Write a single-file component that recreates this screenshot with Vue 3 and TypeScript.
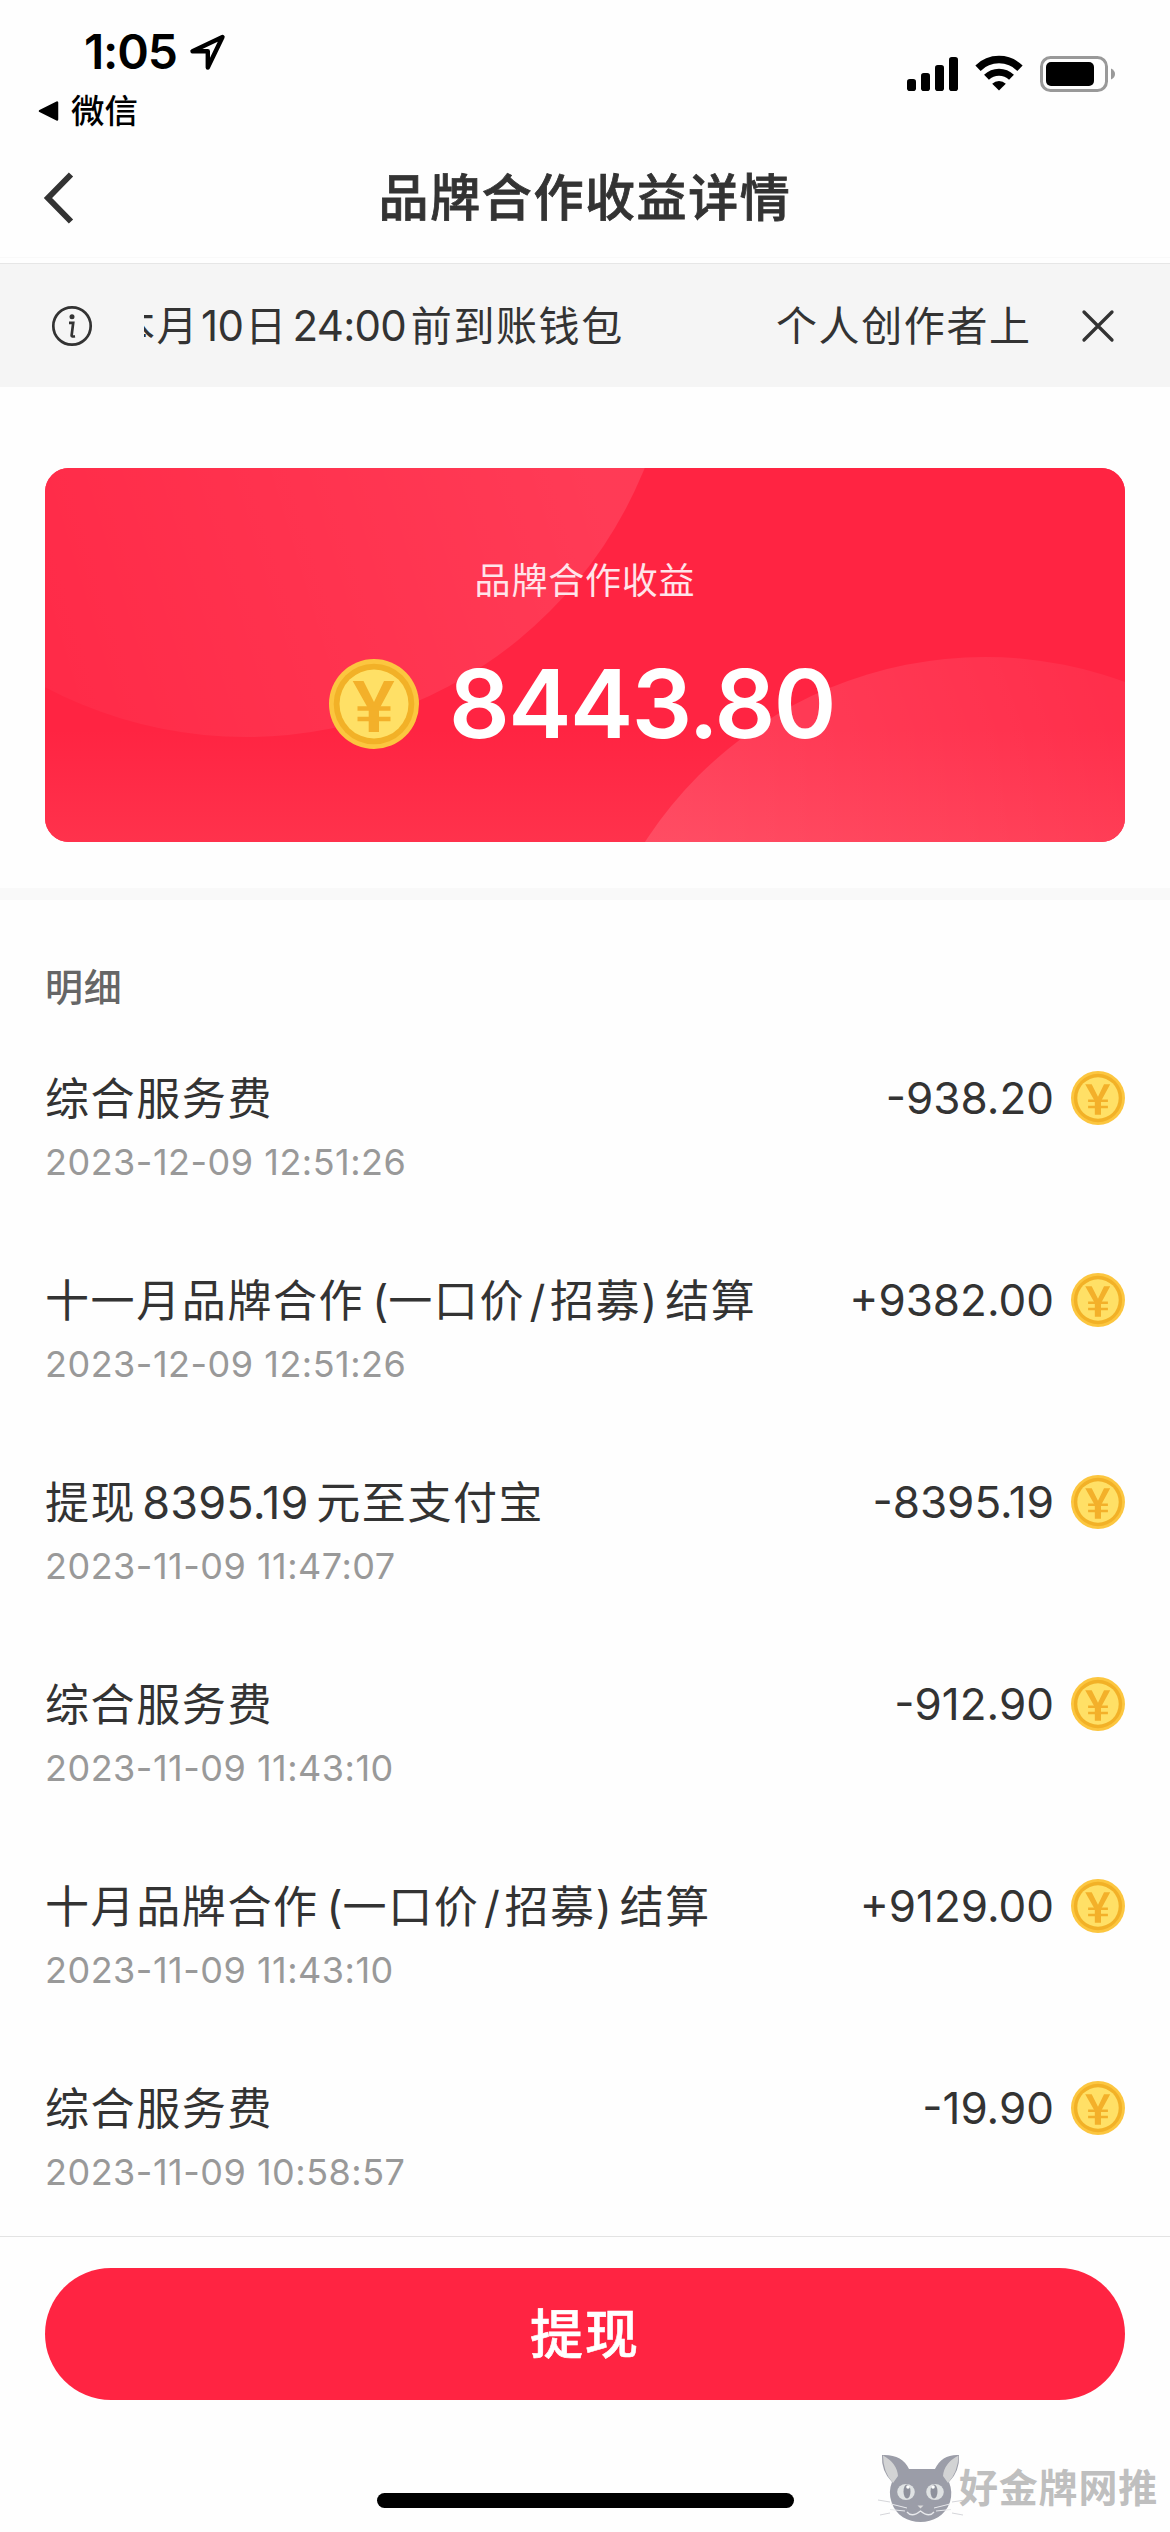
<script setup lang="ts">
interface Run {
  text: string
  kind: 'cjk' | 'num' | 'open' | 'slash' | 'close'
}

interface Entry {
  title: Run[]
  time: string
  amount: string
}

const cjk = (text: string): Run => ({ text, kind: 'cjk' })

const settlement = (month: string): Run[] => [
  cjk(`${month}品牌合作`),
  { text: '(', kind: 'open' },
  cjk('一口价'),
  { text: '/', kind: 'slash' },
  cjk('招募'),
  { text: ')', kind: 'close' },
  cjk('结算'),
]

const entries: Entry[] = [
  { title: [cjk('综合服务费')], time: '2023-12-09 12:51:26', amount: '-938.20' },
  { title: settlement('十一月'), time: '2023-12-09 12:51:26', amount: '+9382.00' },
  {
    title: [cjk('提现'), { text: '8395.19', kind: 'num' }, cjk('元至支付宝')],
    time: '2023-11-09 11:47:07',
    amount: '-8395.19',
  },
  { title: [cjk('综合服务费')], time: '2023-11-09 11:43:10', amount: '-912.90' },
  { title: settlement('十月'), time: '2023-11-09 11:43:10', amount: '+9129.00' },
  { title: [cjk('综合服务费')], time: '2023-11-09 10:58:57', amount: '-19.90' },
]
</script>

<template>
  <div class="screen">
    <svg class="defs" width="0" height="0" aria-hidden="true">
      <symbol id="coin" viewBox="0 0 90 90">
        <circle cx="45" cy="45" r="45" fill="#fcc63f" />
        <circle cx="45" cy="45" r="40.300" fill="#f2b127" />
        <circle cx="45" cy="45" r="34.500" fill="#ffe066" />
        <path d="M23.700 22H34.500L45 43 55 22H65.300L50 50.500V73H39.700V50.500Z" fill="#f3b02a" />
        <path d="M28.500 49.500H61.500M28.500 60H61.500" stroke="#f3b02a" stroke-width="4.400" />
      </symbol>
    </svg>

    <header class="status">
      <div class="status-left">
        <div class="clock">
          <span class="time">1:05</span>
          <svg class="locate" width="37" height="37" viewBox="0 0 37 37">
            <path d="M33.500 3 3.500 17.300H18.800V33.500Z" fill="none" stroke="#000" stroke-width="4.400" stroke-linejoin="round" />
          </svg>
        </div>
        <div class="return">
          <svg width="22" height="22" viewBox="0 0 22 22">
            <path d="M2 11 19 2.500V19.500Z" stroke="#000" stroke-width="2.500" stroke-linejoin="round" />
          </svg>
          <span>微信</span>
        </div>
      </div>
      <div class="status-right">
        <svg width="51" height="34" viewBox="0 0 51 34">
          <rect x="0" y="22" width="9" height="12" rx="2.800" />
          <rect x="14" y="16" width="9" height="18" rx="2.800" />
          <rect x="28" y="8" width="9" height="26" rx="2.800" />
          <rect x="42" y="0" width="9" height="34" rx="2.800" />
        </svg>
        <svg class="wifi" width="48" height="36" viewBox="0 0 48 36">
          <path d="M3 13.200A30 30 0 0 1 45 13.200" fill="none" stroke="#000" stroke-width="7.500" />
          <path d="M11.500 22.200A18 18 0 0 1 36.500 22.200" fill="none" stroke="#000" stroke-width="7" />
          <path d="M17.200 28.700A9.600 9.600 0 0 1 30.800 28.700L24 35.600Z" />
        </svg>
        <svg width="76" height="36" viewBox="0 0 76 36">
          <rect x="1.500" y="1.500" width="65" height="33" rx="9" fill="none" stroke="#999" stroke-width="3" />
          <rect x="6" y="6" width="48" height="24" rx="5" />
          <path d="M71 12.500Q75 14.500 75 18T71 23.500Z" fill="#999" />
        </svg>
      </div>
    </header>

    <nav class="nav">
      <svg class="back" width="32" height="54" viewBox="0 0 32 54">
        <path d="M28 3.500 5 27 28 50.500" fill="none" stroke="#333" stroke-width="6" />
      </svg>
      <h1>品牌合作收益详情</h1>
    </nav>

    <section class="notice">
      <svg class="info" width="42" height="42" viewBox="0 0 42 42">
        <circle cx="21" cy="21" r="18.700" fill="none" stroke="#333" stroke-width="2.700" />
        <circle cx="21" cy="11.700" r="2.500" fill="#333" />
        <path d="M18 17.800H22.200L20.600 30.500Q20.600 32 24 31.300" fill="none" stroke="#333" stroke-width="2.700" />
      </svg>
      <div class="ticker">
        <p class="message">本月<span class="day">10</span>日<span class="hour">24:00</span>前到账钱包</p>
        <p class="message">个人创作者上</p>
      </div>
      <svg class="dismiss" width="34" height="34" viewBox="0 0 34 34">
        <path d="M3 3 31 31M31 3 3 31" stroke="#333" stroke-width="3.300" stroke-linecap="round" />
      </svg>
    </section>

    <main class="content">
      <section class="card">
        <svg class="card-art" width="1080" height="374" viewBox="0 0 1080 374">
          <defs>
            <linearGradient id="base" x1="0" y1="0" x2="0" y2="1">
              <stop offset="0.700" stop-color="#ff2442" />
              <stop offset="1" stop-color="#ff324c" />
            </linearGradient>
            <linearGradient id="orb-left" gradientUnits="userSpaceOnUse" x1="0" y1="230" x2="560" y2="60">
              <stop offset="0" stop-color="#fff" stop-opacity="0.030" />
              <stop offset="1" stop-color="#fff" stop-opacity="0.105" />
            </linearGradient>
            <linearGradient id="orb-right" gradientUnits="userSpaceOnUse" x1="640" y1="374" x2="1060" y2="220">
              <stop offset="0" stop-color="#fff" stop-opacity="0.130" />
              <stop offset="1" stop-color="#fff" stop-opacity="0.050" />
            </linearGradient>
          </defs>
          <rect width="1080" height="374" fill="url(#base)" />
          <circle cx="201" cy="-161" r="430" fill="url(#orb-left)" />
          <circle cx="940" cy="594" r="405" fill="url(#orb-right)" />
        </svg>
        <p class="card-label">品牌合作收益</p>
        <div class="balance">
          <svg width="90" height="90"><use href="#coin" /></svg>
          <strong>8443.80</strong>
        </div>
      </section>

      <section class="details">
        <h2>明细</h2>
        <ul>
          <li v-for="(entry, i) in entries" :key="i">
            <div class="row">
              <span class="title"><span v-for="(run, j) in entry.title" :key="j" :class="run.kind">{{ run.text }}</span></span>
              <span class="amount">{{ entry.amount }}</span>
              <svg class="coin" width="54" height="54"><use href="#coin" /></svg>
            </div>
            <time>{{ entry.time }}</time>
          </li>
        </ul>
      </section>
    </main>

    <footer class="footer">
      <button type="button">提现</button>
      <div class="home-bar"></div>
      <div class="watermark">
        <svg width="90" height="72" viewBox="0 0 90 72">
          <path d="M5 3Q25 2 32 17H58Q65 2 82 3Q83 19 72 30Q76 40 73 50C68 64 56 70 43.500 70S19 64 14.500 50Q11 40 15 30Q4 19 5 3Z" fill="#9b9da8" />
          <path d="M6 3.500Q20 11 21 24L16 31Q6 20 6 3.500ZM81.500 3.500Q67 11 66 24L71 31Q81 20 81.500 3.500Z" fill="#d2d3d4" />
          <ellipse cx="29" cy="40" rx="8.800" ry="8" fill="#dfe2e3" />
          <ellipse cx="58" cy="40" rx="8.800" ry="8" fill="#dfe2e3" />
          <ellipse cx="30" cy="39.500" rx="3.500" ry="7" fill="#8e919c" />
          <ellipse cx="57" cy="39.500" rx="3.500" ry="7" fill="#8e919c" />
          <circle cx="31" cy="35" r="1.800" fill="#fff" />
          <circle cx="56" cy="35" r="1.800" fill="#fff" />
          <path d="M40.500 53.500H46.500L43.500 56.500Z" fill="#dcdcdc" />
          <path d="M30 60Q35 66 43.500 59Q52 66 57 60" fill="none" stroke="#e8e9ec" stroke-width="1.300" />
          <path d="M30 56 14 52M28 59 13 57.500M57 56 73 52M59 59 74 57.500" stroke="#e8e9ec" stroke-width="1" />
          <path d="M13 50 1 48M13 61 3 63M75 50 88 48M75 61 86 63" stroke="#d5d6da" stroke-width="1" />
        </svg>
        <span>好金牌网推</span>
      </div>
    </footer>
  </div>
</template>

<style>
body {
  margin: 0;
  background: #fff;
}
</style>

<style scoped>
.screen {
  position: relative;
  display: flex;
  flex-direction: column;
  width: 1170px;
  height: 2532px;
  overflow: hidden;
  background: #fefefe;
  color: #333;
  font-family: Inter, 'Noto Sans CJK SC', sans-serif;
}

.defs {
  position: absolute;
}

svg {
  display: block;
  flex: none;
}

h1,
h2,
p,
ul {
  margin: 0;
  padding: 0;
  font-weight: 400;
}

.status {
  display: flex;
  justify-content: space-between;
  height: 138px;
  color: #000;
}

.clock {
  display: flex;
  align-items: center;
  height: 40px;
  padding: 32px 0 0 84px;
}

.time {
  width: 105px;
  font-size: 48px;
  font-weight: 600;
  line-height: 40px;
  letter-spacing: -1.2px;
}

.return {
  display: flex;
  align-items: center;
  gap: 11px;
  height: 40px;
  padding: 19px 0 0 38px;
  font-size: 33.5px;
  font-weight: 500;
  line-height: 40px;
}

.status-right {
  display: flex;
  align-items: flex-end;
  height: 92px;
  padding-right: 54px;
}

.status-right svg:first-child {
  margin-bottom: 1px;
}

.wifi {
  margin: 0 17px 1px;
}

.nav {
  display: flex;
  align-items: center;
  height: 119px;
  border-bottom: 1px solid #f9f9f9;
}

.back {
  margin-left: 43px;
}

h1 {
  flex: 1;
  margin-right: 75px;
  font-size: 50px;
  font-weight: 500;
  -webkit-text-stroke: 0.8px #333;
  line-height: 60px;
  letter-spacing: 1.6px;
  text-align: center;
}

.notice {
  display: flex;
  align-items: center;
  height: 123px;
  margin-top: 5px;
  padding: 0 55px 0 51px;
  border-top: 1px solid #e6e6e6;
  background: #f5f5f5;
}

.ticker {
  display: flex;
  width: 888px;
  margin: 0 auto 0 51px;
  overflow: hidden;
}

.message {
  flex: none;
  width: 662px;
  margin-left: -30px;
  padding-top: 1px;
  font-size: 41px;
  line-height: 60px;
  letter-spacing: 1.6px;
  white-space: nowrap;
}

.message + .message {
  width: auto;
  margin-left: 0;
}

.day,
.hour {
  display: inline-block;
  text-align: center;
  font-size: 42px;
  letter-spacing: -0.7px;
}

.day {
  width: 46px;
}

.hour {
  width: 123px;
}

.content {
  flex: 1;
  overflow: hidden;
}

.card {
  position: relative;
  display: flex;
  flex-direction: column;
  align-items: center;
  height: 374px;
  margin: 81px 45px 46px;
  border-radius: 24px;
  overflow: hidden;
  background: #ff2442;
  color: #fff;
}

.card-art {
  position: absolute;
  inset: 0;
}

.card-label {
  position: relative;
  margin-top: 91px;
  color: #ffe4ea;
  font-size: 36px;
  line-height: 44px;
  letter-spacing: 0.8px;
}

.balance {
  position: relative;
  display: flex;
  align-items: center;
  gap: 30px;
  margin-top: 56px;
}

.balance strong {
  margin-right: 6px;
  font-size: 95px;
  font-weight: 600;
  line-height: 90px;
  letter-spacing: -1.6px;
}

.details {
  padding: 65px 45px 0;
  border-top: 12px solid #f9f9f9;
}

h2 {
  color: #666;
  font-size: 38px;
  font-weight: 500;
  line-height: 44px;
  letter-spacing: 0.8px;
}

ul {
  margin-top: 58px;
  list-style: none;
}

li {
  height: 202px;
}

.row {
  display: flex;
  align-items: center;
  height: 62px;
}

.title {
  flex: 1;
  padding-top: 1px;
  font-size: 44px;
  line-height: 62px;
  letter-spacing: 1.6px;
  white-space: nowrap;
}

.num,
.open,
.slash,
.close {
  display: inline-block;
  letter-spacing: 0;
}

.num {
  box-sizing: border-box;
  width: 180px;
  padding-left: 6px;
  font-size: 45px;
  letter-spacing: 0.2px;
}

.open {
  width: 24px;
  text-align: right;
}

.slash {
  width: 25px;
  text-align: center;
}

.close {
  width: 24px;
}

.amount {
  font-size: 44px;
  line-height: 62px;
}

.coin {
  margin-left: 17px;
}

time {
  display: block;
  margin-top: 11px;
  color: #999;
  font-size: 36px;
  line-height: 44px;
  letter-spacing: 0.5px;
}

.footer {
  position: relative;
  height: 295px;
  border-top: 1px solid #e3e3e3;
}

button {
  display: block;
  width: 1080px;
  height: 132px;
  margin: 31px auto 93px;
  padding: 3px 0 0;
  border: 0;
  border-radius: 66px;
  background: #ff2442;
  color: #fff;
  font: 500 53px/129px Inter, 'Noto Sans CJK SC', sans-serif;
  -webkit-text-stroke: 0.6px #fff;
  letter-spacing: 2px;
}

.home-bar {
  width: 417px;
  height: 15px;
  margin: 0 auto;
  border-radius: 8px;
  background: #000;
}

.watermark {
  position: absolute;
  right: 12px;
  bottom: 8px;
  display: flex;
  align-items: center;
  color: #bfbfbf;
  font-size: 39px;
  font-weight: 700;
  line-height: 60px;
  letter-spacing: 0.8px;
}

.watermark svg {
  margin-right: -8px;
}
</style>
